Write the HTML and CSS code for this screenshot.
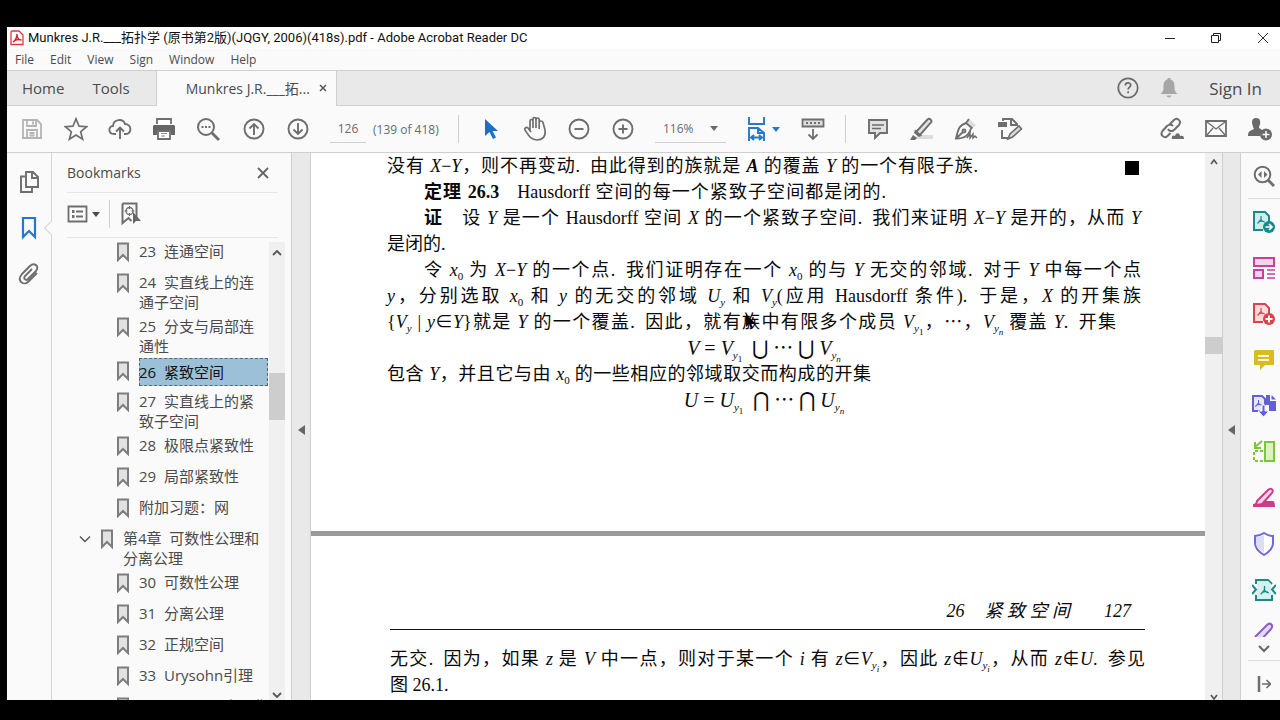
FILE: index.html
```html
<!DOCTYPE html>
<html lang="zh-CN">
<head>
<meta charset="utf-8">
<title>Munkres J.R.___拓扑学 - Adobe Acrobat Reader DC</title>
<link rel="stylesheet" href="styles.css">
</head>
<body>
<svg class="defs" aria-hidden="true">
  <symbol id="bm" viewBox="0 0 14 20"><path d="M2 1.500h10v16.500l-5-5-5 5z" fill="#e2e2e2" stroke="#7d7d7d" stroke-width="2"/></symbol>
  <symbol id="pdfmark" viewBox="0 0 10 10"><path d="M5 1v3.500L1.500 8.500M5 4.500c1 2 2.500 2.500 4 2.500M2.500 7c2-1 4-1.200 5.500-.5" fill="none" stroke="currentColor" stroke-width="1.200"/></symbol>
  <symbol id="down" viewBox="0 0 8 5"><path d="M0 0h8L4 5z" fill="currentColor"/></symbol>
</svg>
<div class="app">
  <header class="titlebar">
    <svg width="14" height="16" viewBox="0 0 14 16"><path d="M2 1h7l4 4v9.500H1V2z" fill="#fff" stroke="#e0393e" stroke-width="1.300"/><path d="M3 12c3-2 4-5 4-8 0 4 2 6 4.500 6C8 9 5.500 9.500 3 12z" fill="none" stroke="#d8242c" stroke-width="1.400"/></svg>
    <h1>Munkres J.R.___拓扑学 (原书第2版)(JQGY, 2006)(418s).pdf - Adobe Acrobat Reader DC</h1>
    <div class="winbtns">
      <button aria-label="Minimize"><svg width="12" height="12"><path d="M1 6.500h10" stroke="#222" fill="none"/></svg></button>
      <button aria-label="Restore"><svg width="12" height="12"><path d="M1.500 3.500h7v7h-7zM3.500 3V1.500h7v7H9" stroke="#222" fill="none"/></svg></button>
      <button aria-label="Close window"><svg width="12" height="12"><path d="M1 1l10 10M11 1L1 11" stroke="#333" fill="none"/></svg></button>
    </div>
  </header>
  <nav class="menubar">
    <button>File</button><button>Edit</button><button>View</button><button>Sign</button><button>Window</button><button>Help</button>
  </nav>
  <div class="tabs">
    <button class="tab home">Home</button><button class="tab tools">Tools</button>
    <div class="tab active"><span>Munkres J.R.___拓...</span><button aria-label="Close tab"><svg width="8" height="8"><path d="M1 1l6 6M7 1L1 7" stroke="#555" stroke-width="1.500"/></svg></button></div>
    <div class="account">
      <button aria-label="Help"><svg width="22" height="22" viewBox="0 0 22 22" fill="none" stroke="#6e6e6e" stroke-width="1.800"><circle cx="11" cy="11" r="9.700"/><path d="M8.300 8.500c0-3.500 5.400-3.500 5.400-.3 0 1.800-2.600 2-2.600 4.300M11.100 14.300v2"/></svg></button>
      <button aria-label="Notifications"><svg width="18" height="20" viewBox="0 0 18 20" fill="#a6a6a6"><path d="M9 0c1.300 0 1.600.7 1.600 1.500C14 2.500 14.500 5.500 14.500 9c0 4 1 5 3 7H.5c2-2 3-3 3-7 0-3.500.5-6.500 3.900-7.500C7.400.7 7.700 0 9 0zM6.500 17.500h5c-.5 2.500-4.500 2.500-5 0z"/></svg></button>
      <button class="signin">Sign In</button>
    </div>
  </div>
  <div class="toolbar">
    <div class="group files">
      <button aria-label="Save"><svg width="22" height="22" viewBox="0 0 22 22" fill="none" stroke="#b4b4b4" stroke-width="1.800"><path d="M2 2h14l4 4v14H2zM6 2v6h9V2M12 3.500v3M6 20v-8h10v8M8.500 15h5M8.500 17.500h5"/></svg></button>
      <button aria-label="Star"><svg width="24" height="24" viewBox="0 0 24 24" fill="none" stroke="#6e6e6e" stroke-width="1.700"><path d="M12 1.800l3 7.400 7.600.5-5.900 5 1.900 7.500L12 18l-6.600 4.200 1.900-7.500-5.900-5 7.600-.5z"/></svg></button>
      <button aria-label="Upload"><svg width="24" height="22" viewBox="0 0 24 22" fill="none" stroke="#6e6e6e" stroke-width="1.900"><path d="M8 16H6c-6 0-6-8-1-8C5.500 1 15 0 17 6c7 0 7 10 1 10h-2M12 21v-11M8 13.500l4-4 4 4"/></svg></button>
      <button aria-label="Print"><svg width="24" height="22" viewBox="0 0 24 22"><path d="M5 6V1h14v5" fill="#fff" stroke="#6e6e6e" stroke-width="1.800"/><path d="M2.500 7h19c1 0 1.500.5 1.500 1.500V17h-4v-4H5v4H1V8.500C1 7.500 1.500 7 2.500 7z" fill="#666"/><path d="M6 13h12v8H6z" fill="#fff" stroke="#6e6e6e" stroke-width="1.800"/><path d="M9 15.500h6M9 18h4" stroke="#888"/></svg></button>
      <button aria-label="Search"><svg width="24" height="24" viewBox="0 0 24 24" fill="none" stroke="#6e6e6e" stroke-width="2"><circle cx="10" cy="10" r="8"/><path d="M16 16l7 7" stroke-width="2.800"/><path d="M5.500 10h2M9 10h2M12.500 10h2"/></svg></button>
      <button class="prev" aria-label="Previous page"><svg width="22" height="22" viewBox="0 0 22 22" fill="none" stroke="#6e6e6e" stroke-width="1.900"><circle cx="11" cy="11" r="9.500"/><path d="M11 17V6M6.500 10.500L11 6l4.500 4.500"/></svg></button>
      <button aria-label="Next page"><svg width="22" height="22" viewBox="0 0 22 22" fill="none" stroke="#6e6e6e" stroke-width="1.900"><circle cx="11" cy="11" r="9.500"/><path d="M11 5v11M6.500 11.500L11 16l4.500-4.500"/></svg></button>
    </div>
    <input class="pageno" type="text" value="126" aria-label="Page number">
    <span class="pagecount">(139 of 418)</span>
    <div class="group view">
      <button aria-label="Select"><svg width="14" height="22" viewBox="0 0 14 22"><path d="M1 1v17l4.500-4 3.500 7 3-1.500L8.500 13H14z" fill="#1a6fc9"/></svg></button>
      <button aria-label="Hand"><svg width="24" height="26" viewBox="0 0 24 26" fill="none" stroke="#6e6e6e" stroke-width="1.700"><path d="M7 14V5c0-2 3-2 3 0v7V3c0-2 3-2 3 0v9V3.500c0-2 3.200-2 3.200 0V13 6.500c0-2 3.200-2 3.800 0L22 14c1 7-3 10-8 10-6 0-8-4-12-10-1-2 1.500-3.500 3-2l3 4"/></svg></button>
      <button aria-label="Zoom out"><svg width="22" height="22" viewBox="0 0 22 22" fill="none" stroke="#6e6e6e" stroke-width="1.900"><circle cx="11" cy="11" r="9.500"/><path d="M6.500 11h9"/></svg></button>
      <button aria-label="Zoom in"><svg width="22" height="22" viewBox="0 0 22 22" fill="none" stroke="#6e6e6e" stroke-width="1.900"><circle cx="11" cy="11" r="9.500"/><path d="M6.500 11h9M11 6.500v9"/></svg></button>
    </div>
    <label class="zoom"><select aria-label="Zoom level"><option>116%</option></select><svg width="8" height="5"><use href="#down"/></svg></label>
    <button class="fit" aria-label="Fit width"><svg width="20" height="26" viewBox="0 0 20 26" fill="none" stroke="#2478cc" stroke-width="1.900"><path d="M2 1v7h15V1M2 25V12h9l6 5v8M11 12v5h6M4 21.500h11M7 19l-3 2.500L7 24M12 19l3 2.500-3 2.500"/></svg><svg width="8" height="5"><use href="#down"/></svg></button>
    <button class="scrollmode" aria-label="Page display"><svg width="24" height="24" viewBox="0 0 24 24" fill="none" stroke="#6e6e6e" stroke-width="1.800"><path d="M1.500 2.500h21v7h-21z" fill="#ddd"/><path d="M5 6h2M9 6h2M13 6h2M17 6h2M12 12v10M7.500 17.500L12 22l4.500-4.500"/></svg></button>
    <div class="group notes">
      <button aria-label="Comment"><svg width="22" height="22" viewBox="0 0 22 22" fill="#e2e2e2" stroke="#6e6e6e" stroke-width="1.900"><path d="M2 2h18v13h-7l-5 5v-5H2z"/><path d="M5 7h12M5 10.500h9" stroke-width="1.300"/></svg></button>
      <button aria-label="Highlight"><svg width="24" height="24" viewBox="0 0 24 24"><path d="M7 18h16v4H4z" fill="#ddd"/><path d="M6 15L17.500 2.500c2-2 5 1 3.500 3L10 18z" fill="#e2e2e2" stroke="#6e6e6e" stroke-width="1.900"/><path d="M5 12.500l7 6-3 1.500-5-4z" fill="#6e6e6e"/><path d="M3 18l4 3-2 2H0z" fill="#6e6e6e"/></svg></button>
      <button aria-label="Sign"><svg width="24" height="24" viewBox="0 0 24 24" fill="none" stroke="#6e6e6e" stroke-width="1.900"><path d="M15 2l7 6-3 3-6-6z" fill="#ddd" stroke="none"/><path d="M11.500 5.500l7 6M12 6C6 8 4.500 10 2 21.500c8 0 12-2 15-10M2.500 21L9 15M12 6l3-4"/><circle cx="10" cy="14" r="1.500"/><path d="M13 21l3-5v5l3-4v4l2-2 2 2" stroke-width="1.500"/></svg></button>
      <button aria-label="Edit"><svg width="26" height="24" viewBox="0 0 26 24" fill="none" stroke="#6e6e6e" stroke-width="1.900"><path d="M6 4V2h9l5 5v2M14 2v6h6M5 13v8h6"/><path d="M11 22l2-5 9-8 2.500 3-9 8z" fill="#ddd" stroke-width="1.600"/><path d="M1 5h9v5H1z" fill="#6e6e6e" stroke="none"/></svg></button>
    </div>
    <div class="group share">
      <button aria-label="Share link"><svg width="24" height="24" viewBox="0 0 24 24" fill="none" stroke="#6e6e6e" stroke-width="2"><path d="M9 8l5-5c3-3 8 1 5 5l-5 5c-2 2-5 1-6-1M13 9c-2-2-5-1-6 0l-4.500 5c-3 4 2 8 5 5l3-3"/><path d="M12 22c-1-4 2-4 3-3 1-4 5-3 5 0 3-1 4 0 4 3z" fill="#6e6e6e" stroke="none"/></svg></button>
      <button aria-label="Email"><svg width="24" height="20" viewBox="0 0 24 20" fill="none" stroke="#6e6e6e" stroke-width="1.800"><path d="M2 2h20v15H2z"/><path d="M3 3l9 7 9-7M3 16l6-7M21 16l-6-7" stroke-width="1.300"/></svg></button>
      <button aria-label="Add person"><svg width="26" height="24" viewBox="0 0 26 24"><path d="M9 1c5 0 5 5 3 9 0 2 3 2 4 4-2 1-3 3-3 5H1c0-4 1-5 6-7C5 8 3 1 9 1z" fill="#6a6a6a"/><circle cx="19" cy="17.500" r="6" fill="#6a6a6a"/><path d="M15.500 17.500h7M19 14v7" stroke="#fff" stroke-width="1.500"/></svg></button>
    </div>
  </div>
  <main>
    <nav class="rail">
      <button aria-label="Pages"><svg width="20" height="24" viewBox="0 0 20 24" fill="none" stroke="#6e6e6e" stroke-width="1.900"><path d="M7 2h7l5 5v10H7zM13 2v6h6M6 6.500H2V22h11v-4"/></svg></button>
      <button class="on" aria-label="Bookmarks"><svg width="16" height="24" viewBox="0 0 16 24" fill="none" stroke="#2478cc" stroke-width="2.200"><path d="M2 2h12v19l-6-6-6 6z"/></svg></button>
      <button aria-label="Attachments"><svg width="22" height="24" viewBox="0 0 22 24" fill="none" stroke="#6e6e6e" stroke-width="1.900"><path d="M14 7l-7 7c-2 3 1 5 3 3l8-8c4-5-2-9-6-5L4 12c-6 7 2 12 6 8l9-9"/></svg></button>
    </nav>
    <aside class="panel">
      <div class="phead"><h2>Bookmarks</h2><button aria-label="Close panel"><svg width="14" height="14"><path d="M2 2l10 10M12 2L2 12" stroke="#666" stroke-width="1.800"/></svg></button></div>
      <div class="ptools">
        <button aria-label="Options"><svg width="21" height="18" viewBox="0 0 21 18" fill="none" stroke="#6e6e6e" stroke-width="1.800"><path d="M1.500 1.500h18v15h-18zM9 6.500h7M9 11.500h7"/><path d="M5 6.500h2.500M5 11.500h2.500" stroke-width="3"/></svg><svg width="8" height="5"><use href="#down"/></svg></button>
        <i class="vsep"></i>
        <button aria-label="Find current bookmark"><svg width="20" height="24" viewBox="0 0 20 24"><path d="M1.500 1.500h14V16M1.500 1.500V21l6-5 3 3" fill="none" stroke="#6e6e6e" stroke-width="2"/><circle cx="8.500" cy="9" r="3.500" fill="none" stroke="#6e6e6e" stroke-width="1.300"/><path d="M8.500 4v3M8.500 11v3M3.500 9h3M10.500 9h3" stroke="#6e6e6e"/><path d="M12 10v12l3-3h5z" fill="#666"/></svg></button>
      </div>
      <div class="listwrap">
        <ul class="list">
          <li><svg><use href="#bm"/></svg><button>23  连通空间</button></li>
          <li><svg><use href="#bm"/></svg><button>24  实直线上的连<br>通子空间</button></li>
          <li><svg><use href="#bm"/></svg><button>25  分支与局部连<br>通性</button></li>
          <li><svg><use href="#bm"/></svg><button class="sel">26  紧致空间</button></li>
          <li><svg><use href="#bm"/></svg><button>27  实直线上的紧<br>致子空间</button></li>
          <li><svg><use href="#bm"/></svg><button>28  极限点紧致性</button></li>
          <li><svg><use href="#bm"/></svg><button>29  局部紧致性</button></li>
          <li><svg><use href="#bm"/></svg><button>附加习题：网</button></li>
          <li class="chapter"><svg class="tw" viewBox="0 0 12 8"><path d="M1 1.500l5 5 5-5" fill="none" stroke="#555" stroke-width="1.400"/></svg><svg><use href="#bm"/></svg><button>第4章  可数性公理和<br>分离公理</button></li>
          <li><svg><use href="#bm"/></svg><button>30  可数性公理</button></li>
          <li><svg><use href="#bm"/></svg><button>31  分离公理</button></li>
          <li><svg><use href="#bm"/></svg><button>32  正规空间</button></li>
          <li><svg><use href="#bm"/></svg><button>33  Urysohn引理</button></li>
          <li><svg><use href="#bm"/></svg><button>34  Urysohn度量化</button></li>
        </ul>
        <div class="sbar">
          <svg width="10" height="6"><path d="M1 5l4-4 4 4" fill="none" stroke="#555" stroke-width="1.800"/></svg>
          <i class="thumb"></i>
          <svg width="10" height="6"><path d="M1 1l4 4 4-4" fill="none" stroke="#555" stroke-width="1.800"/></svg>
        </div>
      </div>
    </aside>
    <button class="fold" aria-label="Collapse panel"><svg width="7" height="10"><path d="M7 0v10L0 5z" fill="#666"/></svg></button>
    <article class="doc">
      <section class="page first">
        <div class="row"><p class="full">没有 <em>X</em>−<em>Y</em>，则不再变动.&ensp;由此得到的族就是 <em class="cal">A</em> 的覆盖 <em>Y</em> 的一个有限子族.</p><i class="qed"></i></div>
        <p class="indent full theorem"><b>定理 26.3</b>&emsp;Hausdorff 空间的每一个紧致子空间都是闭的.</p>
        <p class="indent full"><b>证</b>&emsp;设 <em>Y</em> 是一个 Hausdorff 空间 <em>X</em> 的一个紧致子空间.&ensp;我们来证明 <em>X</em>−<em>Y</em> 是开的，从而 <em>Y</em></p>
        <p>是闭的.</p>
        <p class="indent full">令 <em>x</em><sub>0</sub> 为 <em>X</em>−<em>Y</em> 的一个点.&ensp;我们证明存在一个 <em>x</em><sub>0</sub> 的与 <em>Y</em> 无交的邻域.&ensp;对于 <em>Y</em> 中每一个点</p>
        <p class="full"><em>y</em>，分别选取 <em>x</em><sub>0</sub> 和 <em>y</em> 的无交的邻域 <em>U<sub>y</sub></em> 和 <em>V<sub>y</sub></em>(应用 Hausdorff 条件).&ensp;于是，<em>X</em> 的开集族</p>
        <p class="full short">{<em>V<sub>y</sub></em> | <em>y</em>∈<em>Y</em>}就是 <em>Y</em> 的一个覆盖.&ensp;因此，就有<span class="at"><svg class="cursor" width="10" height="16"><path d="M0 0v13l3-3 2 5 2-1-2-5h4z"/></svg></span>族中有限多个成员 <em>V</em><sub><em>y</em><sub>1</sub></sub>，⋯，<em>V</em><sub><em>y<sub>n</sub></em></sub> 覆盖 <em>Y</em>.&ensp;开集</p>
        <p class="math"><em>V</em> = <em>V</em><sub><em>y</em><sub>1</sub></sub>&ensp;⋃ ⋯ ⋃ <em>V</em><sub><em>y<sub>n</sub></em></sub></p>
        <p class="full closing">包含 <em>Y</em>，并且它与由 <em>x</em><sub>0</sub> 的一些相应的邻域取交而构成的开集</p>
        <p class="math"><em>U</em> = <em>U</em><sub><em>y</em><sub>1</sub></sub>&ensp;⋂ ⋯ ⋂ <em>U</em><sub><em>y<sub>n</sub></em></sub></p>
      </section>
      <section class="page second">
        <header><span>26</span><span>紧 致 空 间</span><span>127</span></header>
        <p class="full">无交.&ensp;因为，如果 <em>z</em> 是 <em>V</em> 中一点，则对于某一个 <em>i</em> 有 <em>z</em>∈<em>V</em><sub><em>y<sub>i</sub></em></sub>，因此 <em>z</em>∉<em>U</em><sub><em>y<sub>i</sub></em></sub>，从而 <em>z</em>∉<em>U</em>.&ensp;参见</p>
        <p>图 26.1.</p>
      </section>
    </article>
    <div class="sbar docbar">
      <svg width="8" height="6"><path d="M1 5l3-4 3 4" fill="none" stroke="#555" stroke-width="1.600"/></svg>
      <i class="thumb"></i>
      <svg width="8" height="6"><path d="M1 1l3 4 3-4" fill="none" stroke="#555" stroke-width="1.600"/></svg>
    </div>
    <button class="fold right" aria-label="Collapse tools"><svg width="7" height="10"><path d="M7 0v10L0 5z" fill="#666"/></svg></button>
    <nav class="tools-rail">
      <button class="find" aria-label="Find tools"><svg width="22" height="22" viewBox="0 0 22 22" fill="none" stroke="#6e6e6e" stroke-width="2"><circle cx="9.500" cy="9.500" r="7.800"/><path d="M15 15l6 6" stroke-width="3"/><path d="M8.500 6v7L5 9.500zM11 6v7l3.500-3.500z" fill="#6e6e6e" stroke="none"/></svg></button>
      <button aria-label="Export PDF"><svg width="24" height="24" viewBox="0 0 24 24" color="#168b8b"><path d="M11 20H2V2h11l4 4v6" fill="#d3ecea" stroke="currentColor" stroke-width="2"/><use href="#pdfmark" x="4" y="5" width="10" height="10"/><circle cx="17" cy="17" r="6" fill="currentColor"/><path d="M13.500 17h6M17 14l3 3-3 3" stroke="#fff" stroke-width="1.600" fill="none"/></svg></button>
      <button aria-label="Organize pages"><svg width="24" height="24" viewBox="0 0 24 24" fill="#f7d3ea" stroke="#c9409a" stroke-width="2"><path d="M2 2h20v8H2zM2 14h9v8H2z"/><path d="M15 14h8M15 18h8M15 22h8" stroke-width="1.300"/></svg></button>
      <button aria-label="Create PDF"><svg width="24" height="24" viewBox="0 0 24 24" color="#d9434e"><path d="M11 20H2V2h11l4 4v6" fill="#fbdcdc" stroke="currentColor" stroke-width="2"/><use href="#pdfmark" x="4" y="5" width="10" height="10"/><circle cx="17" cy="17" r="6" fill="currentColor"/><path d="M13.500 17h7M17 13.500v7" stroke="#fff" stroke-width="2" fill="none"/></svg></button>
      <button aria-label="Comment"><svg width="24" height="24" viewBox="0 0 24 24"><path d="M3 2h18c1 0 1 1 1 1v14h-9l-5 5v-5H2V3z" fill="#d9bb22"/><path d="M6 8h11M6 12h11" stroke="#fff8cf" stroke-width="2"/></svg></button>
      <button aria-label="Combine files"><svg width="24" height="24" viewBox="0 0 24 24"><path d="M8 17H1V2h9l3 3v7" fill="#e8e6ff" stroke="#625edc" stroke-width="2"/><use href="#pdfmark" x="2" y="5" width="9" height="9" color="#625edc"/><path d="M14 1h4v6h6v10h-7v-6h-3z" fill="#625edc"/><path d="M19.500 1L24 5.500h-4.500z" fill="#625edc"/><path d="M10 11h3v6h4l-5.500 6L6 17h4z" fill="#625edc" stroke="#fff"/></svg></button>
      <button aria-label="Compress"><svg width="24" height="24" viewBox="0 0 24 24" fill="none" stroke="#7cc63a" stroke-width="2"><path d="M13 2h9v19h-9z" fill="#dcf2c6"/><path d="M11 11H2v10h9" stroke-dasharray="3 2"/><path d="M10 1L3 7M3 2v6h6"/></svg></button>
      <button aria-label="Redact"><svg width="24" height="24" viewBox="0 0 24 24"><path d="M12 15h9c2 0 2 6 2 6H1v-3z" fill="#cf3b87"/><path d="M5 15L16 4c3-3 6 0 4 3L10 18l-6 1z" fill="#fbd8e8" stroke="#cf3b87" stroke-width="2"/></svg></button>
      <button aria-label="Protect"><svg width="24" height="24" viewBox="0 0 24 24"><path d="M12 1c3 2 6 3 9 3v7c0 5-4 9-9 12-5-3-9-7-9-12V4c3 0 6-1 9-3z" fill="#fff" stroke="#6d68dd" stroke-width="2"/><path d="M12 3v18c-4-3-8-6-8-10V5c3 0 6-1 8-2z" fill="#dcdcf8"/></svg></button>
      <button aria-label="Optimize"><svg width="24" height="24" viewBox="0 0 24 24" color="#168b8b" fill="none" stroke="#168b8b" stroke-width="2"><path d="M4 6V2h12l4 4M4 17v5h16v-5"/><path d="M5 3h11l3 3v15H5z" fill="#d9efed" stroke="none"/><path d="M0 7l4 4.500L0 16M24 7l-4 4.500 4 4.500"/><use href="#pdfmark" x="7" y="7" width="11" height="11"/></svg></button>
      <button class="cut" aria-label="Fill and sign"><svg width="24" height="24" viewBox="0 0 24 24"><path d="M3 16L15 4c3-3 7 0 4 4L8 20" fill="#e6d9f7" stroke="#8a5ccb" stroke-width="2"/></svg></button>
      <button class="more" aria-label="More tools"><svg width="12" height="8"><path d="M1 1l5 5 5-5" fill="none" stroke="#666" stroke-width="2"/></svg></button>
      <button class="open" aria-label="Open tools pane"><svg width="14" height="16" viewBox="0 0 14 16" fill="none" stroke="#6e6e6e" stroke-width="2"><path d="M2 0v16" stroke-width="2.500"/><path d="M5 8h8M9.500 4l4 4-4 4" stroke-width="1.700"/></svg></button>
    </nav>
  </main>
</div>
</body>
</html>
```
FILE: styles.css
```css
* { box-sizing: border-box; }
body {
  margin: 0;
  height: 100vh;
  padding: 27px 0 20px 7px;
  background: #000;
  color: #4b4b4b;
  font-family: "Open Sans", "Noto Sans CJK SC", sans-serif;
  overflow: hidden;
}
button, input, select { font: inherit; color: inherit; background: none; border: 0; padding: 0; margin: 0; }
button { display: flex; align-items: center; justify-content: center; }
svg { display: block; flex: none; }
h1, h2, p, ul { margin: 0; padding: 0; font-weight: normal; }
.defs { position: absolute; width: 0; height: 0; }
.app { height: 100%; display: flex; flex-direction: column; background: #fafafa; }

.titlebar { display: flex; align-items: center; height: 22px; flex: none; background: #fff; padding-left: 3px; }
.titlebar h1 { font-family: Roboto, "Noto Sans CJK SC", sans-serif; font-size: 13px; line-height: 22px; color: #111; margin-left: 4px; white-space: nowrap; }
.winbtns { display: flex; margin-left: auto; }
.winbtns button { width: 46px; }
.winbtns button:last-child { width: 41px; padding-right: 11px; justify-content: flex-end; }

.menubar { display: flex; flex: none; height: 21px; padding-left: 8px; gap: 16px; font-size: 12px; }

.tabs { display: flex; flex: none; height: 36px; background: #e9e9e9; border-top: 1px solid #cfcfcf; border-bottom: 1px solid #cfcfcf; font-size: 15px; }
.tab.home { padding-left: 15px; }
.tab.tools { padding: 0 26px 0 28px; }
.tab.active { display: flex; align-items: center; width: 181px; margin-bottom: -1px; padding: 0 9px 2px 29px; justify-content: space-between; background: #fafafa; border: solid #cfcfcf; border-width: 0 1px; font-size: 14px; }
.account { display: flex; margin-left: auto; align-items: center; gap: 21px; padding-right: 18px; }
.signin { margin-left: 10px; font-size: 17px; }

.toolbar { display: flex; flex: none; align-items: center; height: 47px; padding-left: 3px; border-bottom: 1px solid #cfcfcf; font-size: 12px; color: #6a6a6a; }
.toolbar button { width: 44px; height: 44px; }
.group { display: flex; align-items: center; }
.toolbar .prev { margin-left: 2px; }
.pageno { width: 36px; height: 28px; margin-left: 10px; text-align: center; border-bottom: 1px solid #cfcfcf; }
.pagecount { width: 85px; margin-left: 7px; white-space: nowrap; }
.view { border-left: 1px solid #cfcfcf; height: 28px; padding-left: 10px; }
.zoom { display: flex; align-items: center; width: 71px; height: 28px; margin-left: 10px; padding: 0 8px; border-bottom: 1px solid #cfcfcf; }
.zoom select { appearance: none; flex: 1; }
.toolbar .fit { width: 46px; margin-left: 14px; gap: 5px; color: #2478cc; }
.toolbar .scrollmode { margin-left: 5px; }
.notes { border-left: 1px solid #cfcfcf; height: 28px; margin-left: 10px; padding-left: 10px; }
.share { margin-left: auto; margin-right: -2px; }

main { display: flex; flex: 1; min-height: 0; }
.rail { width: 45px; flex: none; display: flex; flex-direction: column; align-items: center; padding-top: 6px; border-right: 1px solid #d4d4d4; }
.rail button { width: 44px; height: 46px; }
.rail .on { position: relative; }
.rail .on::after { content: ""; position: absolute; right: -5px; top: 18px; width: 9px; height: 9px; background: #fafafa; border: solid #d4d4d4; border-width: 0 0 1px 1px; transform: rotate(45deg); }

.panel { width: 239px; flex: none; display: flex; flex-direction: column; padding-left: 15px; }
.phead { display: flex; align-items: center; justify-content: space-between; height: 40px; margin-right: 13px; padding-right: 8px; border-bottom: 1px solid #e6e6e6; }
.phead h2 { font-size: 14px; }
.ptools { display: flex; align-items: center; height: 45px; margin-right: 13px; padding-bottom: 2px; border-bottom: 1px solid #e6e6e6; }
.ptools button { gap: 4px; }
.vsep { width: 1px; height: 28px; background: #cfcfcf; margin: 0 11px 0 9px; }
.listwrap { display: flex; flex: 1; min-height: 0; padding-right: 6px; }
.list { flex: 1; list-style: none; overflow: hidden; padding-top: 1px; font-size: 15px; }
.list li { display: flex; align-items: flex-start; min-height: 31px; padding-left: 49px; }
.list li svg { width: 14px; height: 20px; margin-top: 3px; }
.list li .tw { width: 12px; height: 8px; margin: 9px 9px 0 0; }
.list .chapter { padding-left: 12px; }
.list button { display: block; margin-left: 9px; padding: 2px 0; line-height: 20px; text-align: left; white-space: pre; }
.list .sel { flex: 1; height: 28px; margin-right: 1px; background: #9bc0d8; color: #111; outline: 1px dashed #567; outline-offset: -1px; }
.sbar { width: 16px; flex: none; display: flex; flex-direction: column; align-items: center; background: #f0f0f0; margin-top: 4px; padding: 8px 0 2px; }
.sbar .thumb { width: 100%; height: 47px; margin: 117px 0 auto; background: #cdcdcd; }

.fold { width: 20px; flex: none; background: #e9e9e9; border: solid #cfcfcf; border-width: 0 1px; padding-top: 6px; }
.fold.right { width: 19px; }
.doc { flex: 1; min-width: 0; overflow: hidden; background: #fff; color: #0a0a0a; font: 18px/26px "Liberation Serif", "Noto Sans CJK SC", serif; }
.doc p { white-space: nowrap; height: 26px; }
.page.first { height: 383px; padding: 0 64px 0 76px; border-bottom: 5px solid #9a9a9a; }
.row { display: flex; align-items: center; gap: 147px; }
.row p { flex: 1; }
.qed { width: 14px; height: 14px; background: #000; margin: 4px 2px 0 0; }
.indent { padding-left: 37px; }
.doc .full { text-align: justify; text-align-last: justify; white-space: normal; }
.doc .short { padding-right: 25px; }
.doc .theorem { padding-right: 255px; }
.doc .closing { padding-right: 270px; }
.math { text-align: center; font-size: 20px; }
.cal { font-weight: bold; }
sub { font-size: 11px; line-height: 0; vertical-align: -4px; }
sub sub { font-size: 9px; vertical-align: -3px; }
.at { position: relative; }
.cursor { position: absolute; left: 4px; top: 2px; }
.page.second { padding: 61px 60px 0 79px; }
.page.second header { display: flex; justify-content: flex-end; gap: 20px; height: 33px; margin-bottom: 16px; padding-right: 14px; border-bottom: 1px solid #111; font-style: italic; line-height: 28px; }
.page.second header span:last-child { margin-left: 14px; }

.docbar { margin-top: 0; padding: 6px 0 0; width: 17px; }
.docbar .thumb { height: 17px; margin-top: 172px; }
.tools-rail { width: 39px; flex: none; display: flex; flex-direction: column; align-items: center; padding-left: 7px; overflow: hidden; }
.tools-rail button { width: 32px; height: 46px; flex: none; }
.tools-rail .find { border-bottom: 1px solid #ddd; }
.tools-rail .cut { height: 24px; overflow: hidden; align-items: flex-start; padding-top: 8px; }
.tools-rail .more { height: 24px; border-bottom: 1px solid #ddd; }
```
